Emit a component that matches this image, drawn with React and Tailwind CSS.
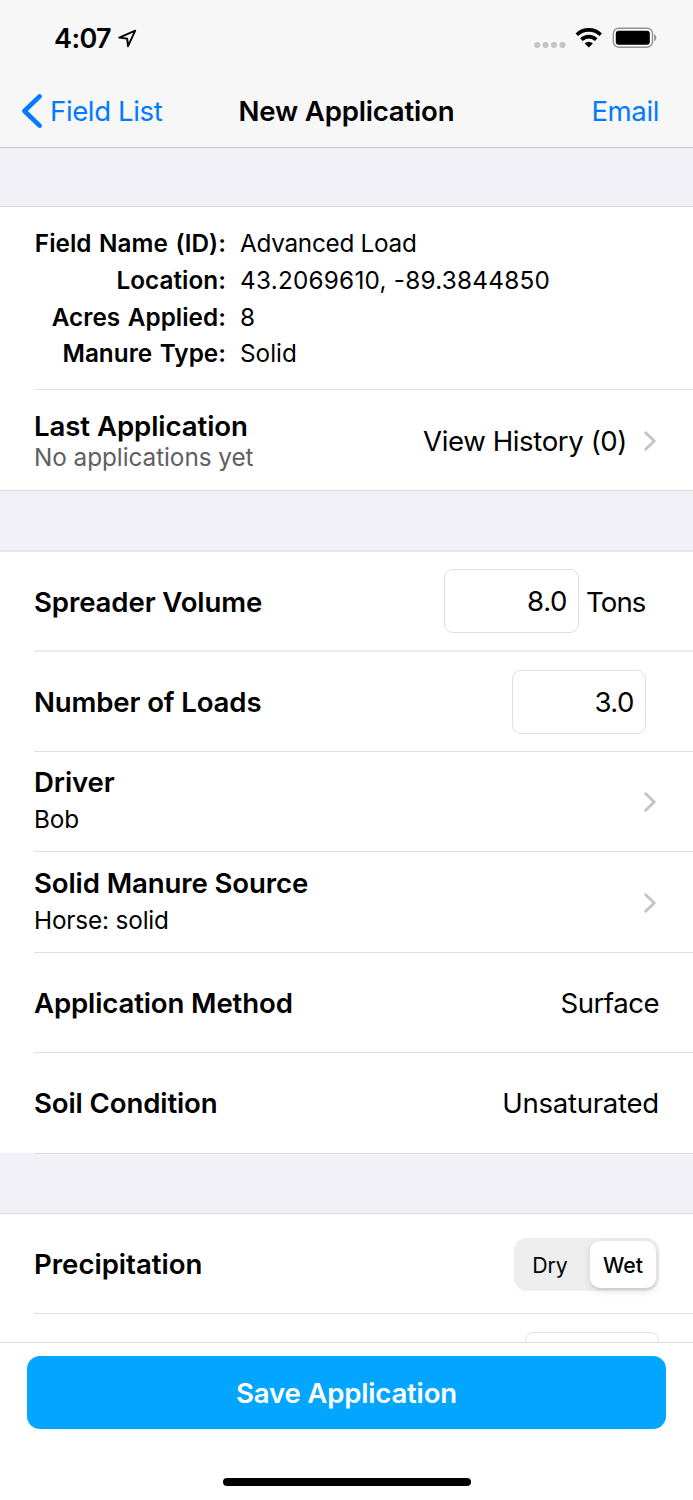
import React from 'react'
import { useState } from 'react'

function Chevron() {
  return (
    <svg className="w-3 h-5 shrink-0" viewBox="0 0 12 20" fill="none" stroke="#c4c4c6" strokeWidth="2.9" strokeLinecap="round" strokeLinejoin="round">
      <path d="M1.7 1.7 L10.2 10 L1.7 18.3" />
    </svg>
  )
}

function StatusBar() {
  return (
    <div className="h-[75px] flex justify-between items-center pl-[54px] pr-9">
      <div className="flex items-center pt-px">
        <div className="text-[27px] leading-8 pt-[2px] font-semibold tracking-[-0.6px]">4:07</div>
        <svg className="w-[19px] h-[19px] ml-[7px]" viewBox="0 0 19 19" fill="none" stroke="#000" strokeWidth="1.9" strokeLinejoin="round">
          <path d="M17.2 1.6 L1.3 8.6 L9.2 9.6 L10 17.2 Z" />
        </svg>
      </div>
      <div className="flex items-center">
        <svg className="w-8 h-5" viewBox="0 0 32 20" fill="#c4c4c4">
          <circle cx="3.2" cy="17" r="3.1" />
          <circle cx="11.6" cy="17" r="3.1" />
          <circle cx="20" cy="17" r="3.1" />
          <circle cx="28.4" cy="17" r="3.1" />
        </svg>
        <svg className="w-[27px] h-5 ml-[9px]" viewBox="0 0 27 20" fill="none" stroke="#000" strokeWidth="3.6">
          <path d="M1.8 6.8 A17.2 17.2 0 0 1 25.8 6.8" />
          <path d="M6.4 11.6 A10.6 10.6 0 0 1 21.2 11.6" />
          <path d="M13.8 19.6 L9.7 15.5 A5.9 5.9 0 0 1 17.9 15.5 Z" fill="#000" stroke="none" />
        </svg>
        <svg className="w-[45px] h-[21px] ml-2.5" viewBox="0 0 45 21">
          <rect x="1.3" y="1.2" width="39.2" height="19" rx="5.4" fill="none" stroke="#949494" strokeWidth="1.4" />
          <rect x="3.8" y="3.8" width="34" height="14" rx="3" fill="#000" />
          <path d="M42.2 7.2 C45 8.4 45 13 42.2 14.2 Z" fill="#949494" />
        </svg>
      </div>
    </div>
  )
}

function NavBar() {
  return (
    <div className="h-[72px] grid grid-cols-[1fr_auto_1fr] items-center px-[21px] text-[27.6px] leading-9">
      <button className="flex items-center text-[#007aff]">
        <svg className="w-[22px] h-9" viewBox="0 0 22 36" fill="none" stroke="#007aff" strokeWidth="4.6" strokeLinecap="round" strokeLinejoin="round">
          <path d="M18.6 3.4 L3.4 18 L18.6 32.6" />
        </svg>
        <span className="ml-[7px] tracking-[-0.4px] whitespace-nowrap">Field List</span>
      </button>
      <div className="font-semibold tracking-[-0.2px]">New Application</div>
      <button className="pr-[13px] text-right text-[#007aff] tracking-[-0.4px]">Email</button>
    </div>
  )
}

function Info({ label, children }) {
  return (
    <>
      <div className="font-semibold text-right tracking-[0.03px] [word-spacing:1.4px] whitespace-nowrap">{label}</div>
      {children}
    </>
  )
}

function LinkRow({ title, value }) {
  return (
    <div className="h-full flex justify-between items-center pr-[37px]">
      <div className="pb-[2px]">
        <div className="text-[27.6px] leading-9 font-semibold tracking-[-0.12px]">{title}</div>
        <div className="text-[24.3px] leading-[38px] tracking-[-0.15px]">{value}</div>
      </div>
      <Chevron />
    </div>
  )
}

function App() {
  const [volume, setvolume] = useState('8.0')
  const [loads, setloads] = useState('3.0')
  const [precipitation, setprecipitation] = useState('Wet')

  return (
    <div className="w-full h-[1500px] flex flex-col overflow-hidden bg-[#f2f1f7] text-black font-['Inter',sans-serif]">
      <div className="h-[148px] shrink-0 bg-[#f7f7f7] border-b border-[#c8c8ca]">
        <StatusBar />
        <NavBar />
      </div>

      <div className="flex-1 min-h-0 overflow-hidden pt-[58px]">
        <div className="bg-white border-y border-[#dcdcdf] pl-[34px]">
          <div className="h-[183px] border-b border-[#e4e4e6] pt-[18px]">
            <div className="grid grid-cols-[192px_1fr] gap-x-[14px] text-[24.3px] leading-[36.8px]">
              <Info label="Field Name (ID):">
                <div className="tracking-[-0.27px]">Advanced Load</div>
              </Info>
              <Info label="Location:">
                <div className="tracking-[0.24px]">43.2069610, -89.3844850</div>
              </Info>
              <Info label="Acres Applied:">
                <div>8</div>
              </Info>
              <Info label="Manure Type:">
                <div>Solid</div>
              </Info>
            </div>
          </div>
          <div className="h-[100px] flex justify-between items-center pt-[2px] pr-[37px]">
            <div>
              <div className="text-[27.6px] leading-8 font-semibold tracking-[-0.08px]">Last Application</div>
              <div className="text-[24.3px] leading-[31px] text-[#606062] tracking-[-0.05px]">No applications yet</div>
            </div>
            <div className="flex items-center gap-[17px]">
              <div className="text-[27.6px] leading-9 tracking-[-0.4px]">View History (0)</div>
              <Chevron />
            </div>
          </div>
        </div>

        <div className="mt-[59px] bg-white border-t-2 border-[#e7e7ea] pl-[34px]">
          <div className="h-[100px] flex justify-between items-center border-b-2 border-[#ebebed] pr-[47px]">
            <div className="text-[27.6px] leading-9 pt-px font-semibold tracking-[-0.12px]">Spreader Volume</div>
            <div className="flex items-center gap-[7px]">
              <input className="w-[135px] h-16 border border-[#dfdfe1] rounded-[9px] px-[11px] text-right text-[27.6px] tracking-[-0.4px]" value={volume} onChange={(e) => setvolume(e.target.value)} />
              <div className="w-[60px] text-[27.6px] leading-9 pt-px tracking-[-0.9px]">Tons</div>
            </div>
          </div>
          <div className="h-[100px] flex justify-between items-center border-b border-[#dedee0] pr-[47px]">
            <div className="text-[27.6px] leading-9 font-semibold tracking-[-0.14px]">Number of Loads</div>
            <input className="w-[134px] h-16 border border-[#dfdfe1] rounded-[9px] px-[11px] text-right text-[27.6px] tracking-[-0.5px]" value={loads} onChange={(e) => setloads(e.target.value)} />
          </div>
          <div className="h-[100px] border-b border-[#dedee0]">
            <LinkRow title="Driver" value="Bob" />
          </div>
          <div className="h-[101px] border-b border-[#dedee0] pt-px">
            <LinkRow title="Solid Manure Source" value="Horse: solid" />
          </div>
          <div className="h-[100px] flex justify-between items-center border-b border-[#dedee0] pr-[34px] text-[27.6px] leading-9">
            <div className="font-semibold tracking-[-0.14px]">Application Method</div>
            <div className="tracking-[-0.5px]">Surface</div>
          </div>
          <div className="h-[100px] flex justify-between items-center pr-[34px] text-[27.6px] leading-9">
            <div className="font-semibold tracking-[-0.12px]">Soil Condition</div>
            <div className="tracking-[-0.28px]">Unsaturated</div>
          </div>
        </div>
        <div className="ml-[34px] h-px bg-[#dedee0]"></div>

        <div className="mt-[59px] bg-white border-t border-[#dcdcdf] pl-[34px]">
          <div className="h-[100px] flex justify-between items-center border-b border-[#dedee0] pr-[34px]">
            <div className="text-[27.6px] leading-9 font-semibold tracking-[-0.02px]">Precipitation</div>
            <div className="w-[145px] h-[53px] mt-[2px] flex justify-between p-[3px] rounded-[13px] bg-[#eeeeee] text-[21.3px]">
              {['Dry', 'Wet'].map((item) => (
                <button
                  key={item}
                  onClick={() => setprecipitation(item)}
                  className={item === precipitation ? 'w-[66px] h-[47px] pt-[2px] rounded-[10px] bg-white font-medium shadow-[0_3px_8px_rgba(0,0,0,0.12),0_2px_1px_rgba(0,0,0,0.05)]' : 'w-[66px] h-[47px] pt-[2px] font-normal'}
                >
                  {item}
                </button>
              ))}
            </div>
          </div>
          <div className="h-[100px] flex justify-end pt-[18px] pr-[34px]">
            <div className="w-[134px] h-16 border border-[#dfdfe1] rounded-[9px]"></div>
          </div>
        </div>
      </div>

      <div className="h-[158px] shrink-0 flex flex-col items-center bg-white border-t border-[#dcdcde] pt-[13px]">
        <button className="w-[639px] h-[73px] pt-[2px] rounded-[13px] bg-[#02a5ff] text-white text-[27.6px] font-semibold tracking-[-0.2px]">Save Application</button>
        <div className="mt-[49px] w-[248px] h-2 rounded-full bg-black"></div>
      </div>
    </div>
  )
}

export default App
